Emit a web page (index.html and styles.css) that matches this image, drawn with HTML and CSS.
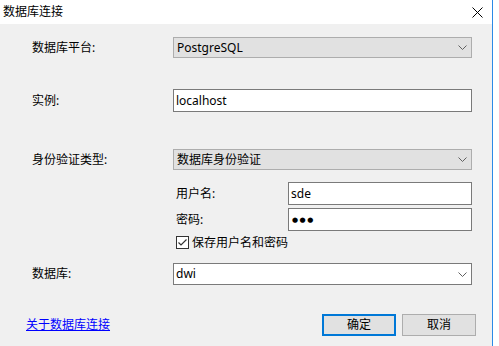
FILE: index.html
```html
<!DOCTYPE html>
<html lang="zh-CN">
<head>
<meta charset="utf-8">
<title>数据库连接</title>
<link rel="stylesheet" href="styles.css">
</head>
<body>
<div class="screen">
  <div class="window">
    <div class="titlebar">
      <span class="title">数据库连接</span>
      <svg class="close" width="11" height="11" viewBox="0 0 11 11"><path d="M0.5 0.5 L10.5 10.5 M10.5 0.5 L0.5 10.5" stroke="#000" stroke-width="1" fill="none"/></svg>
    </div>
    <div class="content">
      <div class="row first">
        <span class="lbl">数据库平台:</span>
        <div class="select"><span class="val">PostgreSQL</span><svg class="chev" width="9" height="5" viewBox="0 0 9 5"><polyline points="0.5,0.5 4.5,4.5 8.5,0.5" stroke="#606060" fill="none"/></svg></div>
      </div>
      <div class="row r-inst">
        <span class="lbl">实例:</span>
        <div class="input">localhost</div>
      </div>
      <div class="row r-auth">
        <span class="lbl">身份验证类型:</span>
        <div class="select"><span class="val">数据库身份验证</span><svg class="chev" width="9" height="5" viewBox="0 0 9 5"><polyline points="0.5,0.5 4.5,4.5 8.5,0.5" stroke="#606060" fill="none"/></svg></div>
      </div>
      <div class="sub r-user">
        <span class="sublbl">用户名:</span>
        <div class="input small">sde</div>
      </div>
      <div class="sub r-pass">
        <span class="sublbl">密码:</span>
        <div class="input small pw">●●●</div>
      </div>
      <div class="sub r-check">
        <svg class="cb" width="13" height="13" viewBox="0 0 13 13"><rect x="0.5" y="0.5" width="12" height="12" fill="#fff" stroke="#333"/><polyline points="2.5,6.5 5,9 10.5,3.5" stroke="#333" stroke-width="1.2" fill="none"/></svg>
        <span class="cbtext">保存用户名和密码</span>
      </div>
      <div class="row r-db">
        <span class="lbl">数据库:</span>
        <div class="combo"><span class="val">dwi</span><svg class="chev" width="9" height="5" viewBox="0 0 9 5"><polyline points="0.5,0.5 4.5,4.5 8.5,0.5" stroke="#606060" fill="none"/></svg></div>
      </div>
      <div class="footer">
        <a class="link" href="#">关于数据库连接</a>
        <div class="buttons">
          <div class="btn primary">确定</div>
          <div class="btn">取消</div>
        </div>
      </div>
    </div>
  </div>
  <div class="edge"></div>
</div>
</body>
</html>
```

FILE: styles.css
```css
* { box-sizing: border-box; }
html, body { margin: 0; padding: 0; background: #fff; }
body {
  font-family: "Noto Sans", "Noto Sans CJK SC", sans-serif;
  font-size: 12px;
  color: #000;
  line-height: 16px;
}
.screen { display: flex; width: 499px; height: 346px; }
.window { width: 492px; height: 346px; display: flex; flex-direction: column; }
.edge { width: 1px; height: 346px; background: #2b8ae6; }
.titlebar {
  height: 24px;
  background: #fff;
  display: flex;
  align-items: center;
  justify-content: space-between;
  padding: 0 9px 0 3px;
}
.title { font-size: 12px; line-height: 16px; }
.close { display: block; }
.content { flex: 1; background: #f0f0f0; display: flex; flex-direction: column; }
.row { display: flex; align-items: center; padding-left: 32px; }
.lbl { width: 141px; }
.first { margin-top: 13px; }
.r-inst { margin-top: 31px; }
.r-auth { margin-top: 37px; }
.r-user { margin-top: 12px; }
.r-pass { margin-top: 3px; }
.r-check { margin-top: 5px; height: 13px; }
.r-db { margin-top: 14px; }
.select {
  width: 299px; height: 21px;
  background: #e1e1e1; border: 1px solid #adadad;
  display: flex; align-items: center; justify-content: space-between;
  padding: 0 4px 0 3px;
}
.combo {
  width: 299px; height: 22px;
  background: #fff; border: 1px solid #7a7a7a;
  display: flex; align-items: center; justify-content: space-between;
  padding: 0 4px 0 2px;
}
.chev { display: block; }
.input {
  width: 299px; height: 23px;
  background: #fff; border: 1px solid #7a7a7a;
  display: flex; align-items: center;
  padding: 0 2px;
}
.input.small { width: 184px; }
.pw { font-family: "DejaVu Sans", sans-serif; font-size: 7px; letter-spacing: 1.5px; padding-left: 3px; }
.sub { display: flex; align-items: center; padding-left: 176px; }
.sublbl { width: 112px; }
.cb { display: block; flex: none; }
.cbtext { margin-left: 3px; }
.footer {
  margin-top: 29px;
  display: flex; align-items: center; justify-content: space-between;
  padding: 0 16px 0 26px;
}
.link { color: #0000ff; text-decoration: underline; }
.buttons { display: flex; gap: 6px; }
.btn {
  width: 74px; height: 22px;
  background: #e1e1e1; border: 1px solid #adadad;
  display: flex; align-items: center; justify-content: center;
}
.btn.primary { border: 2px solid #0078d7; }
```
